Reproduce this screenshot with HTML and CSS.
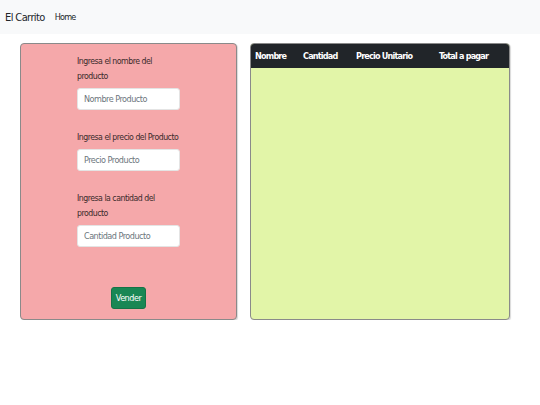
FILE: index.html
```html
<!DOCTYPE html>
<html lang="es">
<head>
<meta charset="utf-8">
<title>El Carrito</title>
<link rel="stylesheet" href="styles.css">
</head>
<body>
<nav class="navbar">
  <span class="brand">El Carrito</span>
  <a class="nav-link" href="#">Home</a>
</nav>
<main class="content">
  <section class="card form-card">
    <form class="form">
      <label class="label">Ingresa el nombre del producto</label>
      <input class="input" type="text" placeholder="Nombre Producto">
      <label class="label label-single">Ingresa el precio del Producto</label>
      <input class="input" type="text" placeholder="Precio Producto">
      <label class="label">Ingresa la cantidad del producto</label>
      <input class="input" type="text" placeholder="Cantidad Producto">
      <button class="btn" type="button">Vender</button>
    </form>
  </section>
  <section class="card table-card">
    <table class="table">
      <thead>
        <tr><th class="c1">Nombre</th><th class="c2">Cantidad</th><th class="c3">Precio Unitario</th><th>Total a pagar</th></tr>
      </thead>
    </table>
  </section>
</main>
</body>
</html>
```
FILE: styles.css
```css
* { box-sizing: border-box; }
body {
  margin: 0;
  font-family: "DejaVu Sans Condensed", "DejaVu Sans", sans-serif;
  color: #212529;
  background: #fff;
}
.navbar {
  height: 34px;
  background: #f8f9fa;
  display: flex;
  align-items: center;
  padding: 0 5px;
  gap: 10px;
}
.brand { font-size: 11px; letter-spacing: -0.6px; color: #212529; }
.nav-link { font-size: 9px; letter-spacing: -0.8px; color: #212529; text-decoration: none; }
.content {
  display: flex;
  gap: 13px;
  padding: 9px 20px 0 20px;
}
.card {
  height: 277px;
  border: 1px solid #8a8a8a;
  border-radius: 4px;
  box-shadow: 1px 1px 1px rgba(0,0,0,0.15);
}
.form-card {
  width: 217px;
  background: #f5a8aa;
  display: flex;
  justify-content: center;
}
.form {
  width: 103px;
  display: flex;
  flex-direction: column;
  padding-top: 10px;
}
.label {
  font-size: 8.7px;
  line-height: 15px;
  letter-spacing: -0.5px;
  color: #3a2a2a;
  margin-bottom: 4px;
}
.label-single { white-space: nowrap; }
.input {
  height: 22px;
  border: 1px solid #e4e4e4;
  border-radius: 3px;
  background: #fff;
  font-family: inherit;
  font-size: 9px;
  letter-spacing: -0.5px;
  padding: 0 6px;
  margin-bottom: 20px;
}
.input::placeholder { color: #6c757d; }
.btn {
  align-self: center;
  margin-top: 20px;
  width: 35px;
  height: 22px;
  background: #198754;
  color: #fff;
  border: 1px solid #157347;
  border-radius: 3px;
  font-family: inherit;
  font-size: 9px;
  letter-spacing: -0.5px;
  padding: 0;
}
.table-card {
  width: 260px;
  background: #e2f5a8;
  overflow: hidden;
}
.table {
  width: 100%;
  border-collapse: collapse;
}
.table th {
  background: #212529;
  color: #fff;
  font-size: 9px;
  font-weight: bold;
  letter-spacing: -0.8px;
  text-align: left;
  height: 24px;
  padding: 0 4px;
  white-space: nowrap;
}
.table th.c1 { width: 48px; }
.table th.c2 { width: 53px; }
.table th.c3 { width: 83px; }
```
